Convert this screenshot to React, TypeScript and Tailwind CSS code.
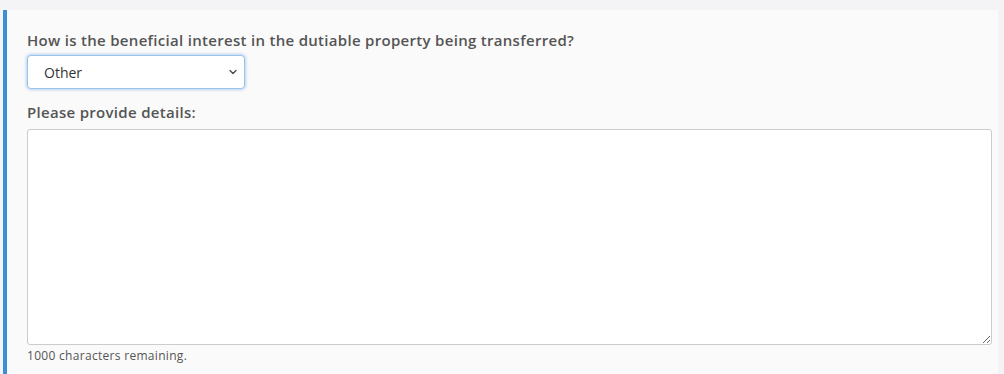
import { ChevronDown } from "lucide-react";

export default function App() {
  return (
    <div className="min-h-screen bg-[#f4f4f6] pt-[10px] font-['Open_Sans',sans-serif]">
      <div className="ml-[3px] mr-[6px] h-[364px] border-l-4 border-[#3d8ed8] bg-[#fafafa] pl-[20px] pr-[8px] pt-[20px]">
        <label className="block text-[15px] font-semibold leading-5 tracking-[0.3px] text-[#555555]">
          How is the beneficial interest in the dutiable property being transferred?
        </label>
        <div className="relative mt-[5px] w-[218px]">
          <select
            defaultValue="other"
            className="h-[34px] w-full appearance-none rounded-[4px] border border-[#9ec3ea] bg-white pl-[16px] pr-8 text-[14px] text-[#333333] shadow-[0_0_3px_1px_rgba(102,165,230,0.45)] outline-none"
          >
            <option value="other">Other</option>
          </select>
          <ChevronDown className="pointer-events-none absolute right-[6px] top-[11px] h-3 w-3 text-[#444444]" strokeWidth={2.5} />
        </div>
        <label className="mt-[13px] block text-[15px] font-semibold leading-5 tracking-[0.3px] text-[#555555]">
          Please provide details:
        </label>
        <textarea className="mt-[7px] block h-[216px] w-[965px] rounded-[3px] border border-[#cccccc] bg-white outline-none" />
        <p className="mt-[3px] text-[12px] leading-4 tracking-[0.3px] text-[#555555]">1000 characters remaining.</p>
      </div>
    </div>
  );
}
